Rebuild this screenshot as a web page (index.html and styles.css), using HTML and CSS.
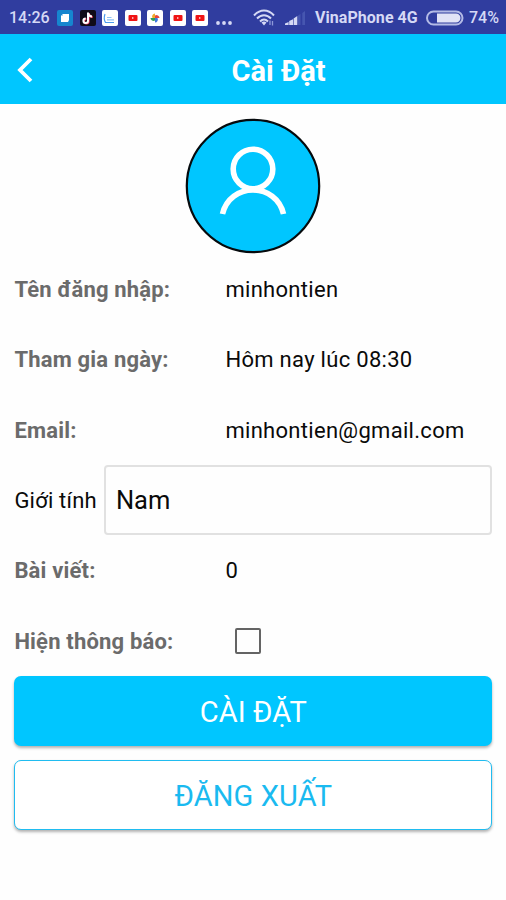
FILE: index.html
```
<!DOCTYPE html>
<html lang="vi">
<head>
<meta charset="utf-8">
<title>Cài Đặt</title>
<link rel="stylesheet" href="styles.css">
</head>
<body>
<div class="status">
  <span class="time">14:26</span>
  <div class="apps">
    <svg class="app" viewBox="0 0 16 16"><rect width="16" height="16" rx="2" fill="#1686cf"/><path d="M6 4h6v6l-1 2H4V6z" fill="#fff"/><path d="M6 4v2H4" fill="#a9d4f2"/></svg>
    <svg class="app" viewBox="0 0 16 16"><rect width="16" height="16" rx="2" fill="#100c18"/><path d="M8 2.500v8.200a2.300 2.300 0 1 1-2.300-2.300M8 3c.4 2.200 1.800 3.300 4 3.400" fill="none" stroke="#f0365d" stroke-width="2" transform="translate(.7 .5)"/><path d="M8 2.500v8.200a2.300 2.300 0 1 1-2.300-2.300M8 3c.4 2.200 1.800 3.300 4 3.400" fill="none" stroke="#fff" stroke-width="2"/></svg>
    <svg class="app" viewBox="0 0 16 16"><rect width="16" height="16" rx="2" fill="#fff"/><path d="M3 4c-1 3-1 6 .5 8.500h8.500" fill="none" stroke="#4a9bed" stroke-width="1.200"/><path d="M5 7.500h4.500M5 9.800h7" stroke="#8fc3f5" stroke-width="1.200"/></svg>
    <svg class="app" viewBox="0 0 16 16"><rect width="16" height="16" rx="2" fill="#fff"/><rect x="3.500" y="5" width="9" height="6" rx="1" fill="#f01414"/><path d="M7.200 7v2L9 8z" fill="#fff"/></svg>
    <svg class="app" viewBox="0 0 16 16"><rect width="16" height="16" rx="2" fill="#fff"/><path d="M8 8V3.500A3 3 0 0 0 5.500 8z" fill="#f0a92a"/><path d="M8 8h4.500A3 3 0 0 0 8 5.500z" fill="#e4473b"/><path d="M8 8v4.500A3 3 0 0 0 10.500 8z" fill="#3e78e0"/><path d="M8 8H3.500A3 3 0 0 0 8 10.500z" fill="#2f9d57"/></svg>
    <svg class="app" viewBox="0 0 16 16"><rect width="16" height="16" rx="2" fill="#fff"/><rect x="3.500" y="5" width="9" height="6" rx="1" fill="#f01414"/><path d="M7.200 7v2L9 8z" fill="#fff"/></svg>
    <svg class="app" viewBox="0 0 16 16"><rect width="16" height="16" rx="2" fill="#fff"/><rect x="3.500" y="5" width="9" height="6" rx="1" fill="#f01414"/><path d="M7.200 7v2L9 8z" fill="#fff"/></svg>
  </div>
  <svg class="dots" viewBox="0 0 18 6"><g fill="#d5d9f5"><circle cx="3" cy="3" r="1.900"/><circle cx="9" cy="3" r="1.900"/><circle cx="15" cy="3" r="1.900"/></g></svg>
  <svg class="wifi" viewBox="0 0 22 18"><g fill="none" stroke="#d5d9f5" stroke-width="2"><path d="M1 6.500C7-.1 15-.1 21 6.500"/><path d="M4 9.500c4.300-4.400 9.700-4.400 14 0"/><path d="M7 12.500c2.600-2.600 5.400-2.600 8 0"/></g><path d="M8.500 13.600q2.500-2 5 0L11 16.500z" fill="#d5d9f5"/><path d="M17 11.500V16M19.500 12v4.500" stroke="#8d98d8" stroke-width="1.300"/></svg>
  <svg class="signal" viewBox="0 0 21 16"><g fill="#d5d9f5"><path d="M0 15v-1.500L3.600 12v3zM4.200 15v-4L8 9.300V15zM8.600 15V8.500l3.700-2.500v9z"/></g><path d="M13 15V5.500L15.500 4v11zM17.300 15V3L20 1v14z" fill="#4656b0"/></svg>
  <span class="carrier">VinaPhone 4G</span>
  <svg class="battery" viewBox="0 0 38 16"><rect x="1" y="1.500" width="35.500" height="13" rx="6.500" fill="none" stroke="#b4bbe6" stroke-width="2"/><path d="M11 3.500h19a4.500 4.500 0 0 1 0 9H11z" fill="#e1e3f6"/></svg>
  <span class="percent">74%</span>
</div>
<header class="header">
  <svg class="back" viewBox="0 0 16 26"><path d="M14 2 3 13 14 24" fill="none" stroke="#fff" stroke-width="3.800"/></svg>
  <h1 class="title">Cài Đặt</h1>
</header>
<main class="content">
  <svg class="avatar" viewBox="0 0 136 136"><circle cx="68" cy="68" r="66.200" fill="#00c6ff" stroke="#050a0d" stroke-width="2.200"/><g fill="none" stroke="#fff" stroke-width="5.600"><circle cx="68" cy="51" r="19.800"/><path d="M37.500 96C41 80.500 54 72 68 72s27 8.500 30.500 24"/></g></svg>
  <div class="rows">
    <div class="row"><span class="label">Tên đăng nhập:</span><span class="value">minhontien</span></div>
    <div class="row"><span class="label">Tham gia ngày:</span><span class="value">Hôm nay lúc 08:30</span></div>
    <div class="row"><span class="label">Email:</span><span class="value">minhontien@gmail.com</span></div>
    <div class="row"><span class="gender">Giới tính</span><div class="field">Nam</div></div>
    <div class="row"><span class="label">Bài viết:</span><span class="value">0</span></div>
    <div class="row"><span class="label">Hiện thông báo:</span><span class="check"></span></div>
  </div>
  <button class="btn primary">CÀI ĐẶT</button>
  <button class="btn outline">ĐĂNG XUẤT</button>
</main>
</body>
</html>
```
FILE: styles.css
```
* { box-sizing: border-box; }
body {
  margin: 0;
  width: 506px;
  height: 900px;
  overflow: hidden;
  background: #fefefe;
  color: #0a0a0a;
  font-family: Roboto, "Liberation Sans", sans-serif;
}
svg { display: block; flex: none; }
.status {
  display: flex;
  align-items: center;
  height: 34px;
  padding: 1px 0 0 9px;
  background: #303d9f;
  color: #d5d9f5;
  font-size: 16px;
  font-weight: 500;
  white-space: nowrap;
}
.time { width: 48px; }
.apps { display: flex; gap: 6.500px; }
.app { width: 16px; height: 16px; }
.dots { width: 18px; height: 6px; margin: 10px 0 0 7px; }
.wifi { width: 22px; height: 18px; margin-left: 20px; }
.signal { width: 21px; height: 16px; margin-left: 10px; }
.carrier { width: 111px; margin-left: 9px; font-weight: 700; letter-spacing: 0.050px; }
.battery { width: 38px; height: 16px; }
.percent { margin-left: 5px; }
.header {
  display: grid;
  grid-template-columns: 17px 16px 1fr 33px;
  align-items: center;
  height: 70px;
  background: #00c6ff;
  color: #fff;
}
.back { grid-column: 2; width: 16px; height: 26px; margin-top: 1px; }
.title {
  margin: 0;
  padding: 3px 0 0 51px;
  text-align: center;
  font-size: 29px;
  line-height: 34px;
  font-weight: 700;
}
.content { padding: 14px 13.600px 0 14.400px; }
.avatar { width: 136px; height: 136px; margin: 0 auto; }
.rows { display: grid; grid-auto-rows: 70.300px; }
.row { display: flex; align-items: center; padding-top: 1px; font-size: 22px; }
.label { width: 211px; color: #6b6b6b; font-weight: 700; letter-spacing: 0.180px; }
.value { letter-spacing: 0.300px; }
.gender { width: 90px; white-space: nowrap; letter-spacing: 0.200px; }
.field {
  display: flex;
  align-items: center;
  flex: 1;
  height: 70px;
  margin-top: -2px;
  padding: 1px 0 0 9.500px;
  border: 2px solid #e1e1e1;
  border-radius: 4px;
  font-size: 25.500px;
}
.check {
  width: 26px;
  height: 26px;
  margin-left: 9.500px;
  border: 2px solid #646464;
  border-radius: 2px;
}
.btn {
  display: flex;
  align-items: center;
  justify-content: center;
  width: 478px;
  height: 70px;
  padding: 3px 0 0;
  border: 0;
  border-radius: 7px;
  font: 400 29px Roboto, "Liberation Sans", sans-serif;
  letter-spacing: 0.100px;
  box-shadow: 0 2px 3px rgba(0, 0, 0, 0.300);
}
.primary { background: #00c6ff; color: #fff; }
.outline { margin-top: 14.500px; padding-top: 2px; background: #fff; color: #1abaf0; border: 1.500px solid #20bcf0; }
```
